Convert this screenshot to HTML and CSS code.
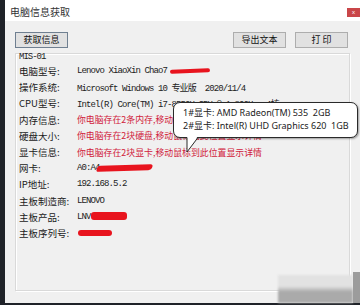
FILE: index.html
```html
<!DOCTYPE html>
<html lang="zh-CN">
<head>
<meta charset="UTF-8">
<title>电脑信息获取</title>
<link rel="stylesheet" href="styles.css">
</head>
<body>

<div class="screen">
    <div class="window">
        <div class="titlebar">
            <span class="title">电脑信息获取</span>
            <span class="close">x</span>
        </div>
        <div class="toolbar">
            <button type="button" class="btn btn-default">获取信息</button>
            <div class="spacer"></div>
            <button type="button" class="btn">导出文本</button>
            <button type="button" class="btn">打 印</button>
        </div>
        <div class="group">
            <div class="host">MIS-01</div>
            <div class="rows">
                <div class="label">电脑型号:</div>
                <div class="value">Lenovo XiaoXin Chao7<span class="scribble s-model"></span></div>
                <div class="label">操作系统:</div>
                <div class="value">Microsoft Windows 10 专业版  2020/11/4</div>
                <div class="label">CPU型号:</div>
                <div class="value">Intel(R) Core(TM) i7-8550U CPU @ 1.80GHz  4核</div>
                <div class="label">内存信息:</div>
                <div class="value warn">你电脑存在2条内存,移动鼠标到此位置显示详情</div>
                <div class="label">硬盘大小:</div>
                <div class="value warn">你电脑存在2块硬盘,移动鼠标到此位置显示详情</div>
                <div class="label">显卡信息:</div>
                <div class="value warn">你电脑存在2块显卡,移动鼠标到此位置显示详情</div>
                <div class="label">网卡:</div>
                <div class="value">A0:A4<span class="scribble s-mac"></span></div>
                <div class="label">IP地址:</div>
                <div class="value">192.168.5.2</div>
                <div class="label">主板制造商:</div>
                <div class="value">LENOVO</div>
                <div class="label">主板产品:</div>
                <div class="value">LNV<span class="scribble s-board"></span></div>
                <div class="label">主板序列号:</div>
                <div class="value"><span class="scribble s-serial"></span></div>
            </div>

            <!-- hover tip for the graphics row -->
            <div class="tooltip">
                <div>1#显卡: AMD Radeon(TM) 535&nbsp; 2GB</div>
                <div>2#显卡: Intel(R) UHD Graphics 620&nbsp; 1GB</div>
                <svg class="tail" width="16" height="18" viewBox="0 0 16 18">
                    <polygon points="2,0 13,0 2,16" fill="#fff"/>
                    <polyline points="2,1.5 2,16 13,1.5" fill="none" stroke="#2a2a2a"/>
                </svg>
            </div>
        </div>
    </div>
    <div class="thumb"></div>
    <div class="thumb-edge"></div>
</div>

</body>
</html>
```

FILE: styles.css
```css
body {
    margin: 0;
    background-color: #1f2228;
    font-family: "Noto Sans CJK SC", sans-serif;
    overflow: hidden;
}

.screen {
    position: relative;
    width: 360px;
    height: 305px;
    display: flex;
}

.window {
    margin-left: 5px;
    width: 355px;
    height: 303px;
    background-color: #f0f0f0;
    display: flex;
    flex-direction: column;
}

.titlebar {
    height: 21px;
    background-color: #fff;
    display: flex;
    justify-content: space-between;
    align-items: flex-start;
}

.title {
    padding: 5px 0 0 5px;
    font-size: 10px;
    line-height: 14px;
    color: #333;
}

.close {
    margin-top: 8px;
    width: 13px;
    height: 9px;
    background-color: #c94649;
    color: #fff;
    font-family: "Liberation Sans", sans-serif;
    font-size: 6px;
    line-height: 9px;
    text-align: center;
}

.toolbar {
    display: flex;
    gap: 9px;
    padding: 11px 12px 0 10px;
}

.spacer {
    flex: 1;
}

.btn {
    width: 53px;
    height: 16px;
    padding: 0;
    border: 1px solid #adadad;
    background-color: #e1e1e1;
    font-family: "Noto Sans CJK SC", sans-serif;
    font-size: 9px;
    line-height: 14px;
    color: #111;
}

.btn-default {
    border-color: #6f7f90;
}

.group {
    position: relative;
    margin: 5px 10px 0 10px;
    height: 236px;
    border: 1px solid #d9d9d9;
    box-shadow: inset 1px 1px 0 #fff, 1px 1px 0 #fff;
}

.host {
    margin-top: -1px;
    padding-left: 3px;
    height: 8px;
    font-family: "Liberation Mono", monospace;
    font-size: 9px;
    letter-spacing: -1px;
    line-height: 8px;
    color: #222;
}

.rows {
    display: grid;
    grid-template-columns: 58px 1fr;
    grid-auto-rows: 16.2px;
    align-items: center;
    padding: 2px 0 0 3px;
}

.label {
    font-size: 9.5px;
    color: #1a1a1a;
    white-space: nowrap;
}

.value {
    font-family: "Liberation Mono", "Noto Sans CJK SC", monospace;
    font-size: 9px;
    letter-spacing: -0.9px;
    color: #222;
    white-space: pre;
}

.value.warn {
    font-family: "Noto Sans CJK SC", sans-serif;
    font-size: 8.9px;
    letter-spacing: 0;
    color: #d0213b;
}

.scribble {
    display: inline-block;
    vertical-align: middle;
    background-color: #e8141e;
    border-radius: 3px;
}

.s-model {
    margin-left: 3px;
    width: 40px;
    height: 4px;
    transform: rotate(-2deg);
}

.s-mac {
    margin-left: -3px;
    width: 55px;
    height: 6px;
    transform: skewX(-20deg) rotate(-2deg);
}

.s-board {
    width: 36px;
    height: 8px;
}

.s-serial {
    margin-left: 1px;
    width: 34px;
    height: 6px;
}

.tooltip {
    position: absolute;
    left: 157px;
    top: 48px;
    width: 185px;
    height: 36px;
    box-sizing: border-box;
    padding: 3px 0 0 9px;
    background-color: #fff;
    border: 1px solid #2a2a2a;
    border-radius: 7px;
    box-shadow: 1px 1px 2px rgba(0, 0, 0, 0.35);
    font-family: "Noto Sans", "Noto Sans CJK SC", sans-serif;
    font-size: 9px;
    line-height: 13px;
    color: #222;
    white-space: nowrap;
}

.tail {
    position: absolute;
    left: 11px;
    top: 33px;
}

.thumb {
    position: absolute;
    left: 278px;
    top: 275px;
    width: 75px;
    height: 28px;
    background: linear-gradient(#e2e2e2 0, #e2e2e2 40%, #aaa 60%, #aaa 100%);
    filter: blur(1px);
}

.thumb-edge {
    position: absolute;
    left: 353px;
    top: 272px;
    width: 7px;
    height: 31px;
    background-color: #9c9c9c;
}
```
